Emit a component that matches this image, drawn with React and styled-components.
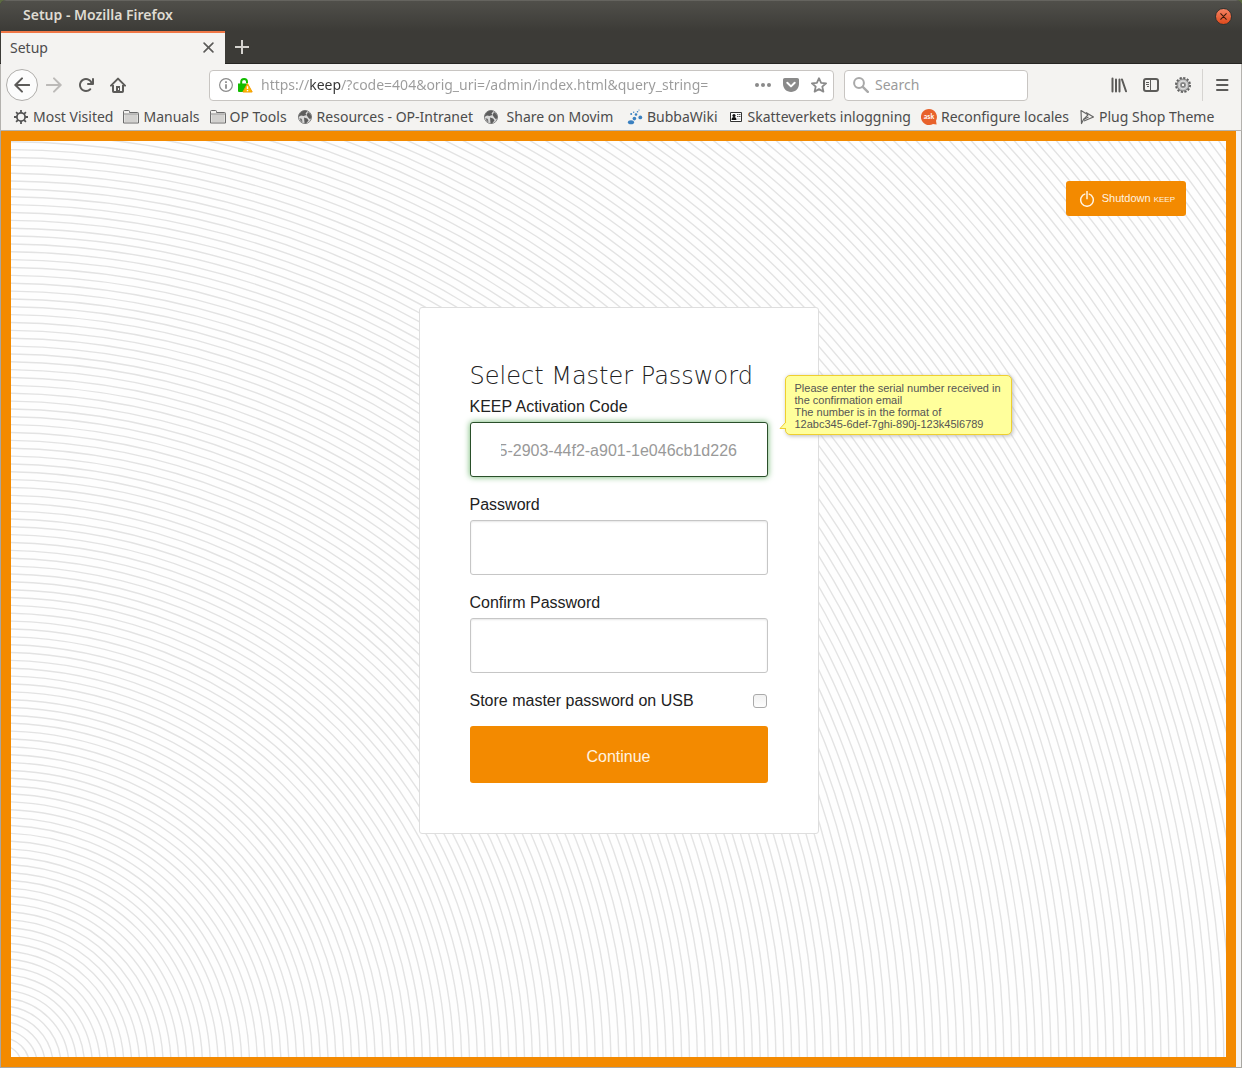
import React, { useEffect, useRef } from 'react';
import styled, { createGlobalStyle } from 'styled-components';

const orange = '#f38a00';
const chrome = '#f4f3f1';
const ink = '#4c4c4c';
const uiFont = '"Noto Sans", "Open Sans", sans-serif';
const pageFont = '"Liberation Sans", Arial, sans-serif';

const GlobalStyle = createGlobalStyle`
  *, *::before, *::after { box-sizing: border-box; }
  body { margin: 0; background: #5b6a41; font-family: ${pageFont}; }
  button, input { font: inherit; }
  button { cursor: pointer; }
`;

const Window = styled.div`
  display: flex;
  flex-direction: column;
  min-height: 100vh;
  overflow: hidden;
  border-radius: 6px 6px 0 0;
  background: #3c3b37;
`;

const TitleBar = styled.header`
  display: flex;
  align-items: center;
  justify-content: space-between;
  height: 31px;
  padding: 0 10px 0 23px;
  border-top: 1px solid #65645f;
  background: linear-gradient(#504f4a, #3c3b37);
`;

const WindowTitle = styled.h1`
  margin: 0;
  padding-bottom: 2px;
  font: 600 14px/28px ${uiFont};
  color: #dfdbd2;
`;

const CloseWindow = styled.button`
  display: grid;
  place-items: center;
  width: 17px;
  height: 17px;
  padding: 0;
  border: 1px solid #33322e;
  border-radius: 50%;
  background: linear-gradient(#f58363, #df4a1c);
  color: #3a1a0c;
`;

const TabStrip = styled.div`
  display: flex;
  gap: 1px;
  height: 33px;
  padding-left: 1px;
  border-bottom: 1px solid #262522;
`;

const Tab = styled.div`
  display: flex;
  align-items: center;
  justify-content: space-between;
  width: 224px;
  height: 33px;
  padding: 0 9px 2px;
  border-top: 2px solid #f07746;
  background: ${chrome};
  font: 14px/20px ${uiFont};
  color: ${ink};
`;

const IconButton = styled.button`
  display: grid;
  place-items: center;
  flex: none;
  width: ${(p) => p.$size || 32}px;
  height: ${(p) => p.$size || 32}px;
  padding: 0;
  border: ${(p) => (p.$ring ? '1px solid #b0aeab' : '0')};
  border-radius: 50%;
  background: ${(p) => (p.$ring ? '#fcfcfc' : 'transparent')};
  color: ${(p) => p.$color || '#5c5b59'};
`;

const Toolbars = styled.div`
  border: solid #b4b2ae;
  border-width: 0 1px 1px;
  background: ${chrome};
`;

const NavBar = styled.div`
  display: flex;
  align-items: center;
  height: 41px;
  padding: 1px 3px 0 5px;
`;

const NavGroup = styled.div`
  display: flex;
  align-items: center;
`;

const box = `
  display: flex;
  align-items: center;
  height: 31px;
  border: 1px solid #c8c5c2;
  border-radius: 4px;
  background: #fff;
  color: #8a8a8a;
`;

const UrlBar = styled.form`
  ${box}
  flex: 1;
  margin: 0 10px 0 75px;
  padding: 0 2px 0 9px;
  gap: 4px;
`;

const SearchBar = styled.form`
  ${box}
  width: 184px;
  margin-right: 75px;
  padding: 0 8px;
  gap: 6px;
`;

const ChromeInput = styled.input`
  flex: 1;
  min-width: 0;
  height: 24px;
  padding: 0 0 2px;
  border: 0;
  outline: 0;
  background: transparent;
  font: 14px/20px ${uiFont};
  color: #9b9b9b;
  &::placeholder { color: #9b9b9b; opacity: 1; }
`;

/* The host part of the address is darker than the rest. */
const UrlInput = styled(ChromeInput)`
  margin-left: 4px;
  background: linear-gradient(90deg, #9b9b9b 48px, #333 48px, #333 80px, #9b9b9b 80px);
  -webkit-background-clip: text;
  background-clip: text;
  -webkit-text-fill-color: transparent;
`;

const Divider = styled.span`
  width: 1px;
  height: 32px;
  margin: 0 3px;
  background: #d6d4d1;
`;

const Bookmarks = styled.nav`
  display: flex;
  align-items: center;
  gap: 10px;
  height: 25px;
  padding: 0 12px 2px;
`;

const Bookmark = styled.a`
  display: flex;
  align-items: center;
  gap: 4px;
  font: 14px/20px ${uiFont};
  color: ${ink};
  text-decoration: none;
  white-space: pre;
`;

const Viewport = styled.div`
  flex: 1;
  display: grid;
  padding-right: 5px;
  border: solid #a9a7a2;
  border-width: 0 1px 1px;
  background: ${chrome};
`;

const Page = styled.main`
  display: grid;
  overflow: hidden;
  border: 10px solid ${orange};
  background: #fefefe;
`;

const Rings = styled.svg`
  grid-area: 1 / 1;
  align-self: end;
  justify-self: start;
  width: 1px;
  height: 1px;
  overflow: visible;
`;

const Content = styled.div`
  grid-area: 1 / 1;
  position: relative;
  display: flex;
  flex-direction: column;
  align-items: center;
  gap: 91px;
  padding: 40px;
`;

const Shutdown = styled.button`
  display: flex;
  align-items: center;
  align-self: flex-end;
  gap: 7px;
  height: 35px;
  padding: 0 11px 0 13px;
  border: 0;
  border-radius: 3px;
  background: ${orange};
  font-size: 11px;
  line-height: 16px;
  color: #fff3e0;
`;

const Small = styled.span`
  font-size: 8px;
`;

const Card = styled.form`
  display: flex;
  flex-direction: column;
  width: 400px;
  padding: 50px;
  border: 1px solid #dedede;
  border-radius: 3px;
  background: #fff;
  font-size: 16px;
  line-height: 24px;
  color: #222;
`;

const Heading = styled.h2`
  margin: 0;
  font: 200 24px/37px "DejaVu Sans Light", "DejaVu Sans", sans-serif;
  white-space: nowrap;
`;

const Field = styled.div`
  position: relative;
  display: flex;
  flex-direction: column;
  gap: 3px;
  margin-bottom: 16px;
`;

const TextInput = styled.input`
  height: 55px;
  padding: 2px 30px 0;
  border: 1px solid ${(p) => (p.$active ? '#2a4f2a' : '#c6c6c6')};
  border-radius: 3px;
  outline: 0;
  background: #fff;
  box-shadow: ${(p) => (p.$active ? '0 0 6px #6cb46c' : 'inset 0 1px 2px #e6e6e6')};
  color: #999;
`;

const Hint = styled.div`
  position: absolute;
  top: -20px;
  left: calc(100% + 17px);
  width: 227px;
  padding: 6px 8px 4px 9px;
  border: 1px solid #efcf2f;
  border-radius: 5px;
  background: #ffff9c;
  box-shadow: 1px 1px 4px #bbb;
  font-size: 11px;
  line-height: 12px;
  color: #555;
`;

const HintTail = styled.svg`
  position: absolute;
  top: 45px;
  left: -7px;
`;

const CheckRow = styled.div`
  display: flex;
  align-items: center;
  justify-content: space-between;
  margin-bottom: 13px;
`;

const CheckBox = styled.input`
  appearance: none;
  width: 14px;
  height: 14px;
  margin: 0 1px 0 0;
  border: 1px solid #aaa;
  border-radius: 3px;
  background: linear-gradient(#f1f1f1, #fdfdfd);
  &:checked { background: ${orange}; }
`;

const Submit = styled.button`
  height: 57px;
  padding: 5px 0 0;
  border: 0;
  border-radius: 3px;
  background: ${orange};
  color: #fff3e0;
`;

const Icon = ({ size = 16, box: vb = 16, children, ...rest }) => (
  <svg width={size} height={size} viewBox={`0 0 ${vb} ${vb}`} fill="currentColor" aria-hidden="true" {...rest}>
    {children}
  </svg>
);

const Arrow = (props) => (
  <Icon {...props}>
    <path d="M1.2 8h14M8 1.4 1.4 8 8 14.6" fill="none" stroke="currentColor" strokeWidth="2" strokeLinecap="round" strokeLinejoin="round" />
  </Icon>
);

const CrossIcon = ({ size, width }) => (
  <Icon size={size} box={10}>
    <path d="M1 1l8 8M9 1l-8 8" fill="none" stroke="currentColor" strokeWidth={width} strokeLinecap="round" />
  </Icon>
);

const HomeIcon = () => (
  <Icon>
    <path d="M1 8.6 8 1.6l7 7" fill="none" stroke="currentColor" strokeWidth="2" strokeLinecap="round" strokeLinejoin="round" />
    <path d="M3 8v6.2a.8.8 0 0 0 .8.8h8.4a.8.8 0 0 0 .8-.8V8" fill="none" stroke="currentColor" strokeWidth="2" />
    <path d="M6 15V9h4v6z" />
    <path d="M8 11h1v2H8z" fill="#f4f3f1" />
  </Icon>
);

const ReloadIcon = () => (
  <Icon>
    <path d="M15 1a1 1 0 0 0-1 1v2.418A6.995 6.995 0 1 0 8 15a6.954 6.954 0 0 0 4.95-2.05 1 1 0 0 0-1.414-1.414A5.019 5.019 0 1 1 12.549 6H10a1 1 0 0 0 0 2h5a1 1 0 0 0 1-1V2a1 1 0 0 0-1-1z" />
  </Icon>
);

const InfoIcon = () => (
  <Icon size={14}>
    <circle cx="8" cy="8" r="7.3" fill="none" stroke="currentColor" strokeWidth="1.3" />
    <path d="M7 3.6h2v2H7zM7 7h2v5.4H7z" />
  </Icon>
);

const LockIcon = () => (
  <Icon>
    <path d="M4.2 8V4.8a2.9 2.9 0 0 1 5.8 0V6" fill="none" stroke="#12bc00" strokeWidth="2" />
    <path d="M1 6.500h9v3L7 15H2a1 1 0 0 1-1-1z" fill="#12bc00" />
    <path d="M10.500 6.500 15.200 15H5.900z" fill="#ffb700" stroke="#f39c00" strokeWidth="1" strokeLinejoin="round" />
    <path d="M9.800 9.300h1.400v2.800H9.800zM9.800 13h1.400v1.300H9.800z" fill="#fff" />
  </Icon>
);

const DotsIcon = () => (
  <Icon>
    <circle cx="2" cy="8" r="2" />
    <circle cx="8" cy="8" r="2" />
    <circle cx="14" cy="8" r="2" />
  </Icon>
);

const PocketIcon = () => (
  <Icon>
    <path d="M1.8 1h12.4C15.3 1 16 1.8 16 2.8V7c0 4.4-3.6 8-8 8S0 11.4 0 7V2.8C0 1.8.7 1 1.8 1z" />
    <path d="m4.3 5.8 3.7 3.6 3.7-3.6" fill="none" stroke="#fff" strokeWidth="2" strokeLinecap="round" strokeLinejoin="round" />
  </Icon>
);

const StarIcon = () => (
  <Icon>
    <path d="m8 1.200 2.100 4.600 5 .5-3.800 3.300 1.100 5L8 12.100l-4.400 2.500 1.100-5L.9 6.300l5-.5z" fill="none" stroke="currentColor" strokeWidth="1.8" strokeLinejoin="round" />
  </Icon>
);

const SearchIcon = () => (
  <Icon color="#a9a9a9">
    <circle cx="6" cy="6" r="4.9" fill="none" stroke="currentColor" strokeWidth="2" />
    <path d="m9.800 9.800 5 5" stroke="currentColor" strokeWidth="2.4" strokeLinecap="round" />
  </Icon>
);

const LibraryIcon = () => (
  <Icon>
    <path d="M1.500 1.500v13M5 2.500v12M8.500 2.500v12M11 2.500l4 11.800" fill="none" stroke="currentColor" strokeWidth="2" strokeLinecap="round" />
  </Icon>
);

const SidebarIcon = () => (
  <Icon>
    <rect x="1" y="2" width="14" height="12" rx="2" fill="none" stroke="currentColor" strokeWidth="2" />
    <path d="M7.500 2v12M3 5.500h3M3 7.500h3M4 9.500h2" fill="none" stroke="currentColor" strokeWidth="1" />
  </Icon>
);

const CogIcon = () => (
  <Icon>
    <circle cx="8" cy="8" r="7" fill="none" stroke="#5e5e5e" strokeWidth="2" strokeDasharray="2.2 1.465" />
    <circle cx="8" cy="8" r="6" fill="#bdbdbd" stroke="#777" />
    <circle cx="8" cy="8" r="3.800" fill="#a5a5a5" stroke="#dcdcdc" strokeWidth="1.200" />
    <circle cx="8" cy="8" r="1.900" fill="#f4f3f1" stroke="#666" />
  </Icon>
);

const MenuIcon = () => (
  <Icon>
    <path d="M3 3h10.500M3 8h10.500M3 13h10.500" fill="none" stroke="currentColor" strokeWidth="2" strokeLinecap="round" />
  </Icon>
);

const GearIcon = () => (
  <Icon>
    <circle cx="8" cy="8" r="4.100" fill="none" stroke="#555" strokeWidth="1.800" />
    <path d="M8 1v3M8 12v3M1 8h3M12 8h3M3.100 3.100l2 2M10.900 10.900l2 2M3.100 12.900l2-2M10.900 5.100l2-2" stroke="#555" strokeWidth="1.800" />
  </Icon>
);

const FolderIcon = () => (
  <Icon>
    <path d="M.5 14V2.500q0-1 1-1h4q1 0 1 1v1h8q1 0 1 1V14z" fill="#f3f2f0" stroke="#6b6b6b" />
    <path d="M1.500 5.500h13V13h-13z" fill="#d2d1cf" />
    <path d="M.5 5h15" stroke="#8a8a8a" />
  </Icon>
);

const GlobeIcon = () => (
  <Icon>
    <circle cx="8" cy="8" r="6.600" fill="#d9d9d9" stroke="#8a8a8a" strokeWidth="1" />
    <path d="M1.500 8C2 4.500 4.500 1.600 8 1.400L10.500 2 8.500 4.500 9.500 6 6.500 7 4 6.500z" fill="#5d5d5d" />
    <path d="m11 3 2.500 2L14.500 8l-1.300 2.500-2-2L9.500 6zM7 8.500l3.200 1 1.300 2-2.500 3-1.500-.5z" fill="#5d5d5d" />
    <path d="M2.500 9 5 10l.5 3.500L3.500 12z" fill="#777" />
  </Icon>
);

const BubbaIcon = () => (
  <Icon>
    <g fill="#3a80c0">
      <ellipse cx="4" cy="13.300" rx="3.100" ry="2" />
      <circle cx="7.400" cy="9.600" r="1.800" />
      <circle cx="13.300" cy="8.400" r="1.900" />
      <circle cx="9" cy="5.500" r="1.300" />
      <circle cx="4.200" cy="5" r="1" />
      <circle cx="10.500" cy="2.800" r=".8" />
      <circle cx="6.700" cy="3.300" r=".7" />
      <circle cx="12" cy="1" r=".6" />
    </g>
  </Icon>
);

const IdIcon = () => (
  <Icon>
    <path d="M2.500 3.500h11v9h-11z" fill="#fff" stroke="#333" />
    <circle cx="6" cy="6.500" r="1.600" fill="#111" />
    <path d="M3.500 11q0-3 2.500-3t2.500 3z" fill="#111" />
    <path d="M9 5.500h3.500M9 7.500h3.500" stroke="#555" strokeDasharray="1.500 .5" />
    <path d="M9 10h3.500" stroke="#bbb" />
  </Icon>
);

const AskIcon = () => (
  <Icon>
    <path d="M8 0a8 8 0 1 0 4 14.900l3.600.7-.6-3.800A8 8 0 0 0 8 0z" fill="#e8622c" />
    <text x="8" y="10" textAnchor="middle" fontFamily="Lato" fontWeight="700" fontSize="7" fill="#fff">ask</text>
  </Icon>
);

const PlugIcon = () => (
  <Icon>
    <path d="M2 1.500 9 5.800 4.500 10.500 2.500 14.500z" fill="none" stroke="#666" strokeWidth="1.200" strokeLinejoin="round" />
    <path d="M7 3.500 14.500 8 5 12M4.500 10.500 9.500 8" fill="none" stroke="#666" strokeWidth="1.200" strokeLinejoin="round" />
  </Icon>
);

const PowerIcon = () => (
  <Icon>
    <path d="M6.300 2.900a6.300 6.300 0 1 0 3.400 0M8 0v8.300" fill="none" stroke="currentColor" strokeWidth="1.500" />
  </Icon>
);

const links = [
  ['Most Visited', GearIcon],
  ['Manuals', FolderIcon],
  ['OP Tools', FolderIcon],
  ['Resources - OP-Intranet', GlobeIcon],
  [' Share on Movim ', GlobeIcon],
  ['BubbaWiki', BubbaIcon],
  ['Skatteverkets inloggning', IdIcon],
  ['Reconfigure locales', AskIcon],
  ['Plug Shop Theme', PlugIcon],
];

const radii = Array.from({ length: 280 }, (_, i) => 5 + i * 7.857);

export default function App() {
  const code = useRef(null);
  useEffect(() => {
    code.current.scrollLeft = code.current.scrollWidth;
  }, []);

  return (
    <>
      <GlobalStyle />
      <Window>
        <TitleBar>
          <WindowTitle>Setup - Mozilla Firefox</WindowTitle>
          <CloseWindow aria-label="Close window"><CrossIcon size={7} width={1.5} /></CloseWindow>
        </TitleBar>
        <TabStrip>
          <Tab>
            Setup
            <IconButton $size={16} aria-label="Close tab"><CrossIcon size={11} width={1.5} /></IconButton>
          </Tab>
          <IconButton aria-label="New tab" $color="#d5d3cf">
            <Icon><path d="M8 1v14M1 8h14" stroke="currentColor" strokeWidth="2" /></Icon>
          </IconButton>
        </TabStrip>
        <Toolbars>
          <NavBar>
            <NavGroup>
              <IconButton $ring aria-label="Back"><Arrow /></IconButton>
              <IconButton aria-label="Forward" $color="#bcbab8"><Arrow transform="scale(-1 1)" /></IconButton>
              <IconButton aria-label="Reload"><ReloadIcon /></IconButton>
              <IconButton aria-label="Home"><HomeIcon /></IconButton>
            </NavGroup>
            <UrlBar onSubmit={(e) => e.preventDefault()}>
              <InfoIcon />
              <LockIcon />
              <UrlInput aria-label="Address" defaultValue="https://keep/?code=404&orig_uri=/admin/index.html&query_string=" />
              <IconButton type="button" $size={24} $color="#8a8a8a" aria-label="Page actions"><DotsIcon /></IconButton>
              <IconButton type="button" $size={24} $color="#8a8a8a" aria-label="Save to Pocket"><PocketIcon /></IconButton>
              <IconButton type="button" $size={24} $color="#8a8a8a" aria-label="Bookmark"><StarIcon /></IconButton>
            </UrlBar>
            <SearchBar onSubmit={(e) => e.preventDefault()}>
              <SearchIcon />
              <ChromeInput aria-label="Search" placeholder="Search" />
            </SearchBar>
            <NavGroup>
              <IconButton aria-label="Library"><LibraryIcon /></IconButton>
              <IconButton aria-label="Sidebars"><SidebarIcon /></IconButton>
              <IconButton aria-label="Settings"><CogIcon /></IconButton>
              <Divider />
              <IconButton aria-label="Menu"><MenuIcon /></IconButton>
            </NavGroup>
          </NavBar>
          <Bookmarks>
            {links.map(([label, Glyph]) => (
              <Bookmark href="#" key={label}><Glyph />{label}</Bookmark>
            ))}
          </Bookmarks>
        </Toolbars>
        <Viewport>
          <Page>
            <Rings aria-hidden="true">
              <g fill="none" stroke="#e3e3e3" strokeWidth="1.400">
                {radii.map((r) => <circle key={r} cx="-10" cy="10" r={r} />)}
              </g>
            </Rings>
            <Content>
              <Shutdown type="button">
                <PowerIcon />
                <span>Shutdown <Small>KEEP</Small></span>
              </Shutdown>
              <Card onSubmit={(e) => e.preventDefault()}>
                <Heading>Select Master Password</Heading>
                <Field>
                  <label htmlFor="code">KEEP Activation Code</label>
                  <TextInput id="code" ref={code} $active aria-describedby="code-hint" defaultValue="5-2903-44f2-a901-1e046cb1d226" />
                  <Hint id="code-hint" role="tooltip">
                    Please enter the serial number received in the confirmation email<br />
                    The number is in the format of<br />
                    12abc345-6def-7ghi-890j-123k45l6789
                    <HintTail width="8" height="9" viewBox="0 0 8 9">
                      <path d="M8 1H7L1 8h7z" fill="#ffff9c" />
                      <path d="M7 1 1 7.500h6" fill="none" stroke="#efcf2f" />
                    </HintTail>
                  </Hint>
                </Field>
                <Field>
                  <label htmlFor="password">Password</label>
                  <TextInput id="password" type="password" />
                </Field>
                <Field>
                  <label htmlFor="confirm">Confirm Password</label>
                  <TextInput id="confirm" type="password" />
                </Field>
                <CheckRow>
                  <label htmlFor="usb">Store master password on USB</label>
                  <CheckBox id="usb" type="checkbox" />
                </CheckRow>
                <Submit>Continue</Submit>
              </Card>
            </Content>
          </Page>
        </Viewport>
      </Window>
    </>
  );
}
